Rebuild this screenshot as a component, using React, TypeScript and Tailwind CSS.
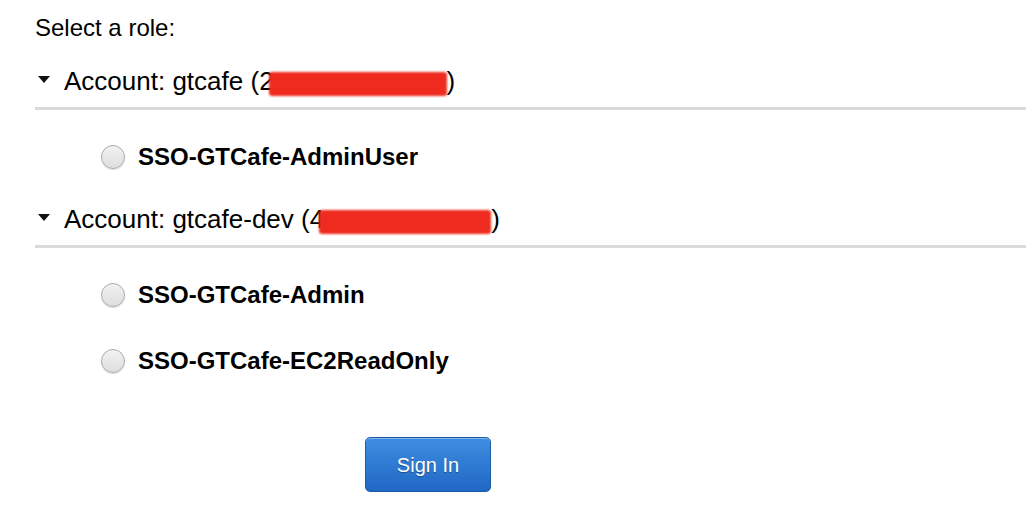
import React from 'react';

type Account = {
  name: string;
  first: string;
  blob: number;
  top: number;
  roles: string[];
};

const accounts: Account[] = [
  { name: 'gtcafe', first: '2', blob: 178, top: 24, roles: ['SSO-GTCafe-AdminUser'] },
  { name: 'gtcafe-dev', first: '4', blob: 172, top: 27, roles: ['SSO-GTCafe-Admin', 'SSO-GTCafe-EC2ReadOnly'] },
];

function Radio() {
  return (
    <span className="inline-block w-[24px] h-[24px] rounded-full border border-[#ababab] bg-gradient-to-b from-[#f2f2f2] to-[#dedede] shadow-[0_1px_1px_rgba(0,0,0,0.15)]" />
  );
}

function AccountBlock({ a }: { a: Account }) {
  return (
    <section>
      <div
        className="flex items-center h-[30px] text-[26px] leading-[30px]"
        style={{ marginTop: a.top }}
      >
        <svg width="12" height="7" viewBox="0 0 12 7" className="ml-[3px] mr-[14px] mt-[-3px]">
          <path d="M0 0 H12 L6 7 Z" fill="#111" />
        </svg>
        <span className="whitespace-nowrap">
          Account: {a.name} ({a.first}
          <span
            className="inline-block h-[24px] align-[-6px] bg-[#ef2a1f] rounded-[3px] blur-[0.8px] -ml-[5px]"
            style={{ width: a.blob }}
          />
          )
        </span>
      </div>
      <div className="mt-[11px] h-[3px] bg-[#dadada]" />
      <div className="flex flex-col gap-[26px] mt-[27px]">
        {a.roles.map((r) => (
          <label key={r} className="flex items-center h-[40px] pl-[66px] gap-[13px]">
            <Radio />
            <span className="text-[24px] leading-[28px] font-bold">{r}</span>
          </label>
        ))}
      </div>
    </section>
  );
}

export default function App() {
  return (
    <div className="min-h-screen bg-white text-black pl-[35px] pt-[14px] font-['Liberation_Sans',Arial,sans-serif]">
      <p className="text-[24px] leading-[28px]">Select a role:</p>
      {accounts.map((a) => (
        <AccountBlock key={a.name} a={a} />
      ))}
      <button className="mt-[56px] ml-[330px] w-[126px] h-[55px] rounded-[5px] border border-[#1a5aa8] bg-gradient-to-b from-[#3f8de2] to-[#1f68c4] text-white text-[20px] shadow-[inset_0_1px_0_rgba(255,255,255,0.35)] [text-shadow:0_1px_1px_rgba(0,0,0,0.35)]">
        Sign In
      </button>
    </div>
  );
}
